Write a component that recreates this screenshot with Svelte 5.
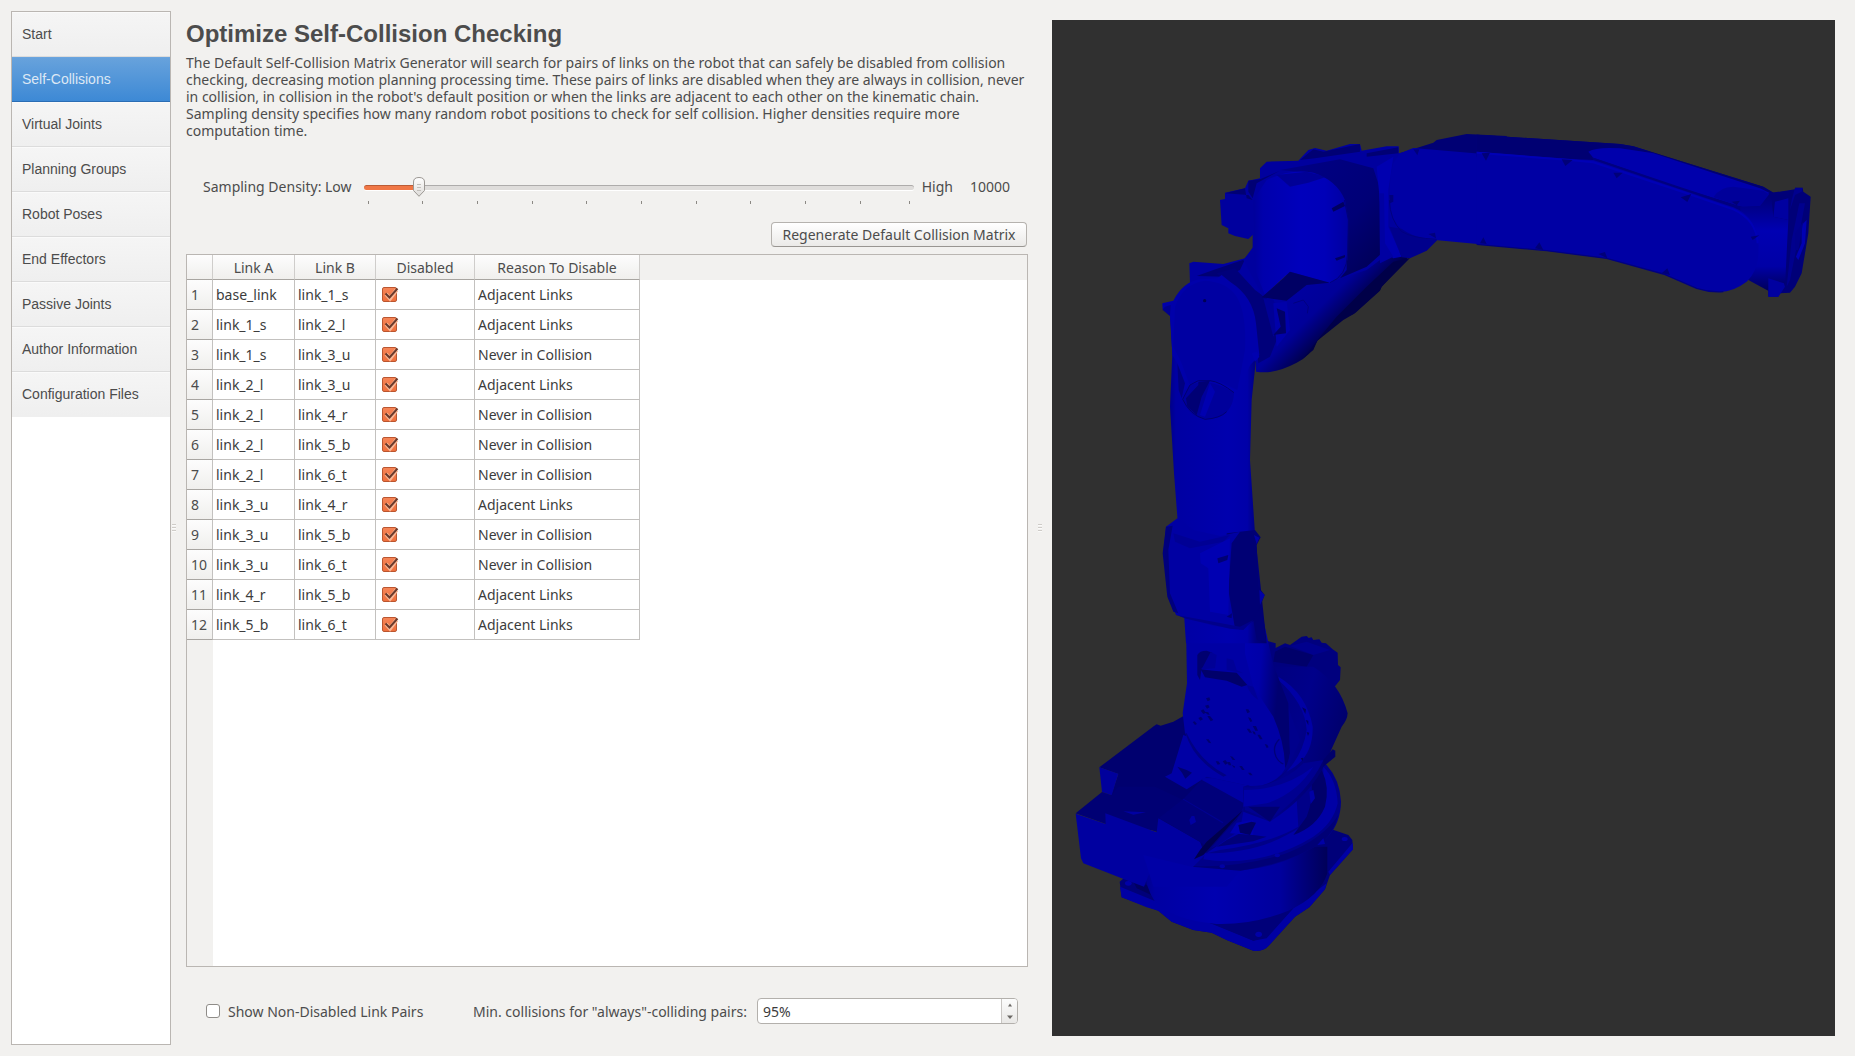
<script>
  const steps = [
    'Start', 'Self-Collisions', 'Virtual Joints', 'Planning Groups', 'Robot Poses',
    'End Effectors', 'Passive Joints', 'Author Information', 'Configuration Files'
  ];
  let current = $state('Self-Collisions');
  const adjacent = 'Adjacent Links';
  const never = 'Never in Collision';
  let pairs = $state([
    { a: 'base_link', b: 'link_1_s', disabled: true, reason: adjacent },
    { a: 'link_1_s', b: 'link_2_l', disabled: true, reason: adjacent },
    { a: 'link_1_s', b: 'link_3_u', disabled: true, reason: never },
    { a: 'link_2_l', b: 'link_3_u', disabled: true, reason: adjacent },
    { a: 'link_2_l', b: 'link_4_r', disabled: true, reason: never },
    { a: 'link_2_l', b: 'link_5_b', disabled: true, reason: never },
    { a: 'link_2_l', b: 'link_6_t', disabled: true, reason: never },
    { a: 'link_3_u', b: 'link_4_r', disabled: true, reason: adjacent },
    { a: 'link_3_u', b: 'link_5_b', disabled: true, reason: never },
    { a: 'link_3_u', b: 'link_6_t', disabled: true, reason: never },
    { a: 'link_4_r', b: 'link_5_b', disabled: true, reason: adjacent },
    { a: 'link_5_b', b: 'link_6_t', disabled: true, reason: adjacent }
  ]);
  let density = $state(9.2);
  let showAll = $state(false);
  let minCollisions = $state('95%');
  const ticks = Array.from({ length: 11 });

  function step(by) {
    const n = Math.min(100, Math.max(0, (parseInt(minCollisions) || 0) + by));
    minCollisions = n + '%';
  }
</script>

<div class="window">
  <nav class="steps" aria-label="Setup steps">
    {#each steps as name}
      <button type="button" class="step" class:selected={current === name} onclick={() => (current = name)}>{name}</button>
    {/each}
  </nav>

  <div class="splitter" aria-hidden="true"><i></i></div>

  <main class="content">
    <h1>Optimize Self-Collision Checking</h1>
    <p class="intro">
      The Default Self-Collision Matrix Generator will search for pairs of links on the robot that can safely be disabled from collision<br />
      checking, decreasing motion planning processing time. These pairs of links are disabled when they are always in collision, never<br />
      in collision, in collision in the robot's default position or when the links are adjacent to each other on the kinematic chain.<br />
      Sampling density specifies how many random robot positions to check for self collision. Higher densities require more<br />
      computation time.
    </p>

    <div class="density">
      <label for="density">Sampling Density: Low</label>
      <div class="slider" style="--fill: {density / 100}">
        <input id="density" type="range" min="0" max="100" step="0.1" bind:value={density} />
        <svg class="handle" viewBox="0 0 12 20" aria-hidden="true">
          <defs><linearGradient id="knob" x1="0" x2="0" y1="0" y2="1"><stop offset="0" stop-color="#fff" /><stop offset="1" stop-color="#dddbd8" /></linearGradient></defs>
          <path d="M.5 5Q.5 .5 6 .5T11.500 5V13.500L6 19.300 .5 13.500z" fill="url(#knob)" stroke="#9b9793" />
          <path d="M4 7.500h4M4 10.500h4M4 13.500h4" stroke="#c2bfbb" />
        </svg>
        <div class="ticks" aria-hidden="true">{#each ticks as _}<i></i>{/each}</div>
      </div>
      <span class="high">High</span>
      <output for="density">10000</output>
    </div>

    <div class="actions"><button type="button" class="push">Regenerate Default Collision Matrix</button></div>

    <div class="matrix">
      <table>
        <thead>
          <tr>
            <th class="num"></th><th class="la">Link A</th><th class="lb">Link B</th><th class="dis">Disabled</th><th class="why">Reason To Disable</th>
          </tr>
        </thead>
        <tbody>
          {#each pairs as pair, i}
            <tr>
              <th scope="row">{i + 1}</th>
              <td>{pair.a}</td>
              <td>{pair.b}</td>
              <td>
                <label class="tick">
                  <input type="checkbox" bind:checked={pair.disabled} aria-label="Disable {pair.a} and {pair.b}" />
                  <svg viewBox="0 0 18 16" aria-hidden="true">
                    <path d="M4 7 L8 11.500 L14.500 3" fill="none" stroke="#f9b795" stroke-width="4" />
                    <path d="M3.500 6.500 L7.500 10.500 L15.500 1.500" fill="none" stroke="#6b3a2c" stroke-width="2" />
                  </svg>
                </label>
              </td>
              <td>{pair.reason}</td>
            </tr>
          {/each}
        </tbody>
      </table>
      <div class="gutter"></div>
    </div>

    <div class="options">
      <label class="show"><input type="checkbox" bind:checked={showAll} />Show Non-Disabled Link Pairs</label>
      <label class="min" for="min">Min. collisions for "always"-colliding pairs:</label>
      <div class="spin">
        <input id="min" type="text" bind:value={minCollisions} />
        <div class="arrows">
          <button type="button" aria-label="Increase" onclick={() => step(1)}><svg viewBox="0 0 6 4"><path d="M1 3.500h4L3 .5z" /></svg></button>
          <button type="button" aria-label="Decrease" onclick={() => step(-1)}><svg viewBox="0 0 6 4"><path d="M0 .5h6L3 4z" /></svg></button>
        </div>
      </div>
    </div>
  </main>

  <div class="splitter wide" aria-hidden="true"><i></i></div>

  <section class="view" aria-label="Robot model">
    <svg viewBox="1052 20 783 1016" role="img" aria-label="Blue six-axis robot arm">
      <defs>
        <linearGradient id="drum" x1="0" x2="1"><stop offset="0" stop-color="#000083" /><stop offset=".08" stop-color="#0000a2" /><stop offset=".4" stop-color="#0000b0" /><stop offset=".75" stop-color="#00009c" /><stop offset="1" stop-color="#000058" /></linearGradient>
        <linearGradient id="motor" x1="0" x2="1" y2=".4"><stop offset="0" stop-color="#000078" /><stop offset=".6" stop-color="#00008a" /><stop offset="1" stop-color="#00006a" /></linearGradient>
        <linearGradient id="leg" x1="0" x2="1"><stop offset="0" stop-color="#000088" /><stop offset=".06" stop-color="#0000a2" /><stop offset=".6" stop-color="#0000ae" /><stop offset=".8" stop-color="#0000a8" /><stop offset=".88" stop-color="#000080" /><stop offset="1" stop-color="#000068" /></linearGradient>
        <linearGradient id="shin" x1="0" x2="1" y2=".3"><stop offset="0" stop-color="#0000b0" /><stop offset=".4" stop-color="#0000a8" /><stop offset=".8" stop-color="#000070" /></linearGradient>
        <linearGradient id="elbow" gradientUnits="userSpaceOnUse" x1="470" y1="180" x2="590" y2="300"><stop offset="0" stop-color="#0000a0" /><stop offset=".5" stop-color="#000098" /><stop offset=".75" stop-color="#000070" /><stop offset="1" stop-color="#000044" /></linearGradient>
        <linearGradient id="head" x1="0" x2="1"><stop offset="0" stop-color="#00009a" /><stop offset=".1" stop-color="#0000ac" /><stop offset=".5" stop-color="#0000bc" /><stop offset=".75" stop-color="#0000b8" /><stop offset="1" stop-color="#0000a0" /></linearGradient>
        <linearGradient id="cap" x1="0" x2="1" y1="0" y2="1"><stop offset="0" stop-color="#000088" /><stop offset=".6" stop-color="#000076" /><stop offset="1" stop-color="#000050" /></linearGradient>
        <linearGradient id="wrist" y1="0" y2="1" x1="0" x2="0"><stop offset="0" stop-color="#00006c" /><stop offset=".4" stop-color="#0000b2" /><stop offset=".75" stop-color="#0000a6" /><stop offset="1" stop-color="#000058" /></linearGradient>
      </defs>

      <!-- base, turntable and shoulder -->
      <g transform="translate(1040 620) scale(.33333)">
        <path fill="#000079" d="M860 628 870 626 925 645 937 660 939 688 870 765 855 808 808 862 765 890 688 975Q670 996 640 992L560 960 515 938 460 930 395 905 355 872 245 832 239 785 262 766z" />
        <path fill="#0000a4" d="M240 800 350 845 400 880 520 912 600 945 640 962 680 955 760 865 860 790 855 808 808 862 765 890 688 975Q670 996 640 992L560 960 515 938 460 930 395 905 355 872 320 862 245 832z" />
        <path fill="#0000a4" d="M865 755 938 668 939 688 870 765z" />
        <path fill="#000079" d="M500 905 640 905 745 868 760 865 680 950 640 962z" />
        <g fill="#0000a8"><ellipse cx="265" cy="790" rx="10" ry="7" /><ellipse cx="656" cy="943" rx="10" ry="8" /><ellipse cx="914" cy="657" rx="9" ry="6" /></g>
        <path fill="#000060" d="M280 785 340 800 345 830 290 805z" />
        <path fill="url(#drum)" d="M300 680H862L862 760Q840 830 745 872Q640 915 530 912Q400 900 345 845Q315 800 312 740z" />
        <path fill="#00008c" d="M440 280 700 140 840 300 855 435 860 600 600 735 450 742 400 470z" />
        <path fill="#00007e" d="M500 690 620 640 800 610 700 680 500 710z" />
        <path fill="#000088" d="M700 560 800 400 860 435Q900 480 903 545Q902 610 860 655Q760 735 600 752Q520 755 455 745L490 700 700 600z" />
        <path fill="#0000a5" d="M850 440Q890 480 893 550Q880 610 820 650Q740 700 640 718Q560 730 490 718L495 700Q640 700 740 645Q830 600 850 530z" />
        <path fill="#000076" d="M456 738Q600 745 740 700Q850 655 895 585 880 640 845 668Q750 730 600 752Q520 755 455 745z" />
        <path fill="#00006a" d="M815 490 845 450Q870 500 855 560Q830 620 760 645L800 590Q820 540 815 490z" />
        <g fill="#0000a5"><ellipse cx="547" cy="739" rx="8" ry="6" /><ellipse cx="712" cy="706" rx="8" ry="6" /><path d="M832 675 850 655 855 672zM808 515 820 510 825 535 812 552zM878 525l10 2-2 8z" /></g>
        <path fill="#0000a5" d="M610 575 690 560 770 540 775 620Q690 670 540 690L500 700 600 630z" />
        <path fill="#000079" d="M560 660 600 640 680 650 640 664 530 680z" />

        <!-- electrical boxes -->
        <path fill="#00006f" d="M342 318 350 313 362 317 400 305 432 287 440 340 400 460 510 480 615 545 590 600 490 700 350 635 195 580 235 462 178 442z" />
        <path fill="#0000a5" d="M430 345 395 460 375 470 440 508 500 470 640 500 470 360z" />
        <path fill="#00006f" d="M412 440 440 450 456 458 436 476 426 458z" />
        <path fill="#00009c" d="M178 442 235 461 215 526 186 516z" />
        <path fill="#000074" d="M107 580 186 516 215 526 235 500 345 500 430 540 350 632 198 612z" />
        <path fill="#0000a0" d="M107 581 197 612 196 580 325 628 350 637 355 595 480 665 495 705 455 745 330 755 312 800 245 775 130 730 123 715z" />
        <path fill="#0000a6" d="M310 705 455 740 600 752 560 800 340 800z" />
        <path fill="#00007a" d="M488 476 615 548 600 585 500 700 490 672 357 594 430 537z" />
        <path fill="#000092" d="M430 536 550 607 548 610 428 538z" />
        <path fill="#0000a2" d="M488 474 520 475 640 500 616 544 612 550 486 480z" />
        <path fill="#00004c" d="M610 570 490 705 462 718 480 690 500 665z" />
        <path fill="#0000a2" d="M448 600 455 588 463 588 468 606 452 615zM250 574 318 577 280 584z" />
        <path fill="#0000b0" d="M590 608 640 600 640 645 570 640z" />
        <path fill="#000065" d="M595 615 635 605 648 608 630 645 600 638z" />

        <!-- rear motor -->
        <path fill="#00007e" d="M680 62 707 70V84L735 70 750 75 785 50 800 48 806 54 815 52 820 60 838 58 845 68 858 70 878 88 893 98 894 135 902 142 900 180 878 208 700 150z" />
        <path fill="#00006a" d="M705 95 735 80 820 105 800 140 700 125z" />
        <path fill="#00008d" d="M750 78 800 65 870 90 820 105z" />
        <path fill="url(#motor)" d="M700 140 820 140Q900 190 923 280 922 300 905 320L860 420Q820 520 690 605L610 575V500L735 460 780 360z" />
        <path fill="#00006a" d="M850 420 878 388 886 392V410L850 440z" />
        <path fill="#0000a5" d="M715 170Q800 220 818 320 820 400 765 440L740 455Q790 400 800 330 795 250 715 180z" />
        <path fill="#000062" d="M786 262 798 268 796 282zM797 300l8 2v14zM800 336l8 2-4 10zM782 415l8-2-2 10z" />
        <path fill="#000090" d="M610 500Q720 500 790 430L850 420Q810 510 690 600L615 570z" />
        <path fill="#0000a6" d="M612 510Q730 510 820 440 770 520 680 550L610 560z" />
        <path fill="#000070" d="M625 560 720 560 690 605z" />

        <!-- lower arm -->
        <path fill="#0000a4" d="M437 -40H665L690 130 735 240 748 350 750 400Q742 440 725 462Q690 500 630 498L560 470Q480 420 435 340L428 280 441 190z" />
        <path fill="url(#shin)" d="M615 0H670L700 135 745 250 750 400Q745 430 735 445 735 370 700 290L640 200 615 100z" />
        <path fill="#000083" d="M436 338Q460 420 550 470L560 466Q480 425 440 340z" />
        <path fill="#000080" d="M610 504Q700 505 748 440 720 490 650 500z" />
        <path fill="#000070" d="M472 165V105Q478 92 500 92L517 98 508 130 485 145 480 180z" />
        <path fill="#00006a" d="M482 148 520 152 590 158 622 195 605 200 560 182 495 172z" />
        <path fill="#000096" d="M512 96 530 105 525 145 485 148zM560 115 580 120 590 150 610 160 560 150zM620 195 640 200 655 240Q630 225 620 195z" />
        <path fill="none" stroke="#000078" stroke-width="4" d="M718 358Q695 380 708 410 715 425 730 432" />
        <g fill="#000070"><path d="M498 235l10-3 3 8-8 4zM495 257l10-3 4 8-8 4zM482 272l8-4 8 10-8 4zM502 288l8 0 10 12-8 4zM475 294l8-4 6 8-8 4zM458 306l6-2 7 8-6 3zM495 275l10 2 4 8-8-2zM498 358l8 0 8 12-8-2zM617 268l8 0 5 8-8 4zM624 292l8 2 5 10-6 2zM620 326l8 0 8 12-8 0zM638 318l10 0 6 14-8 0zM637 333l8 3 2 8-6-2zM652 344l8 0 8 14-8 0zM674 372l8 2 4 8-6 2zM527 424l8 0 6 8-8 2zM548 424l8-4 8 10-8 4zM570 408l8 2 8 10-8 0zM562 426l8 0 4 10-8 0zM575 435l10 4-2 6zM598 438l8 0 8 12-8 0zM624 458l8 0 6 8-8 0z" /></g>
      </g>

      <!-- link between shoulder and elbow -->
      <g transform="translate(1130 240) scale(.33333)">
        <path fill="url(#elbow)" d="M370 170 640 60 920 -10 890 30 835 52 755 140 750 150 670 222 640 235 600 265 562 303Q540 350 500 368 430 405 378 395z" />
        <path fill="#0000a2" d="M178 70 190 65 280 72 345 55 370 20 400 60 410 180 300 180 180 130z" />
        <path fill="#000074" d="M200 108 250 90 345 58 330 90 280 110z" />
        <path fill="url(#leg)" d="M120 220 380 340 365 480 360 660 375 880 410 1210H168L142 830 132 700 120 500 127 340z" />
        <path fill="#00007a" d="M260 100 315 85 375 150 430 190 440 300 420 350 385 370 370 220 320 150z" />
        <path fill="#000095" d="M400 175 430 178 455 240 430 290z" />
        <path fill="#0000aa" d="M430 190 470 185 480 270 440 320z" />
        <path fill="#000067" d="M440 205 465 215 468 280 430 285 452 260z" />
        <path fill="#0000aa" d="M97 190 130 182Q160 125 210 118L262 115 275 105 300 125Q370 170 378 250L388 345 370 365Q350 380 345 430L315 450Q250 410 180 435L150 465 142 370 127 345 120 228 98 208z" />
        <path fill="#0000a2" d="M135 200Q160 130 225 122 290 125 320 170 350 220 345 330L322 450 270 425Q225 415 178 432L155 370 130 320z" />
        <path fill="#00007b" d="M97 210 120 228 122 195 105 200z" opacity=".6" />
        <path fill="#0000b0" d="M365 340 380 335 388 350 375 365z" />
        <circle cx="224" cy="182" r="5" fill="#000055" />
        <path fill="#00009b" d="M180 435Q240 410 312 458 310 510 270 530 225 545 190 525 170 510 158 478z" />
        <path fill="none" stroke="#000070" stroke-width="3" d="M312 458Q270 425 240 422L205 422 180 435 158 478Q180 525 225 538 270 535 290 515" />
        <path fill="#000074" d="M205 425 240 422 215 470 200 525 172 500 168 475 205 435z" />
        <path fill="#0000b0" d="M240 430 255 455 225 530 210 525z" />
        <path fill="#000080" d="M142 370 165 430 155 475 146 450z" />

        <path fill="#000074" d="M290 880 375 870 392 892 380 915 385 1040 404 1065 392 1095 375 1140 330 1168 295 1160z" />
        <path fill="#0000a3" d="M108 860 142 835 190 870 270 888 330 875 305 910 295 1050 315 1165 250 1158 138 1125 118 1070 100 940z" />
        <path fill="#00007c" d="M108 860 128 857 115 930 120 1060 145 1120 130 1115 112 1070 98 940z" />
        <path fill="#000094" d="M130 880 210 905 300 885 280 905 180 925 135 905z" />
        <path fill="#0000b2" d="M210 940 300 895 295 1125 240 1115 235 985 212 970z" />
        <path fill="#000074" d="M262 955 295 945 292 960 265 970zM290 1130 306 1120 305 1135z" />
        <path fill="#00008a" d="M140 1125 250 1145 330 1160 370 1140 340 1170 300 1166 168 1136z" />
        <path fill="#0000a6" d="M372 885 388 893 380 912zM388 1050 404 1065 390 1095z" />
        <path fill="#000074" d="M370 1140 392 1095 408 1205 380 1200z" />
      </g>

      <!-- upper arm housing -->
      <g transform="translate(1180 120) scale(.33333)">
        <path fill="#00009e" d="M120 240 135 237V218L195 205 205 182 240 175V145L260 125 355 122 385 90 405 84 440 92 510 72H540L545 92 620 79H656V100L680 95 700 380 600 420 560 450 440 490 380 495 310 460 250 532 190 420 218 385V345L205 357 165 348 145 340V325L125 315z" />
        <path fill="#000074" d="M135 220 195 205 200 235 218 240 205 225zM360 120 400 88 430 95 540 72V95L405 115zM560 100 655 82V100L560 110zM205 182 240 178 300 152 230 190 218 235 205 215z" />
        <path fill="url(#cap)" d="M300 150 480 118 580 145 598 200 605 400 560 440 480 475 500 450V280L470 210 400 160z" />
        <path fill="#0000b0" d="M590 140 640 110 625 210V320L665 410 640 415 610 390 605 300z" />
        <path fill="#0000a2" d="M598 220 612 220 615 370 640 410 600 430z" />
        <path fill="#00008c" d="M628 320 780 345 770 362 740 392 690 415 665 412z" />
        <path fill="url(#head)" d="M220 240 260 180Q330 145 400 158 470 180 495 240L505 300 502 420Q490 470 450 490L330 455 255 525 225 450z" />
        <path fill="#000082" d="M290 165 380 155 440 170 385 188 330 200z" opacity=".65" />
        <path fill="#000060" d="M455 265 490 245 495 258 460 275zM465 415 495 405 495 412 470 422z" />
        <path fill="none" stroke="#00007a" stroke-width="3" d="M493 240 505 300 503 400Q500 470 450 488" />
        <path fill="#000064" d="M245 532 310 475 330 455 450 488 380 495 320 542z" />
        <path fill="none" stroke="#000080" stroke-width="3" d="M340 550 370 540 385 560 382 580" />
        <path fill="#000048" d="M690 414 605 500 600 512 525 580 490 600 412 662 400 690 370 715 420 650 470 590 560 500 640 425z" />

        <path fill="#000074" d="M660 100 760 68 770 60 860 42 980 48V110L710 100z" />
        <path fill="#0000a4" d="M660 100 700 84 980 108V380L765 360Q660 350 635 285 620 200 640 130z" />
        <path fill="none" stroke="#000080" stroke-width="3" d="M628 240Q630 300 665 335 700 355 770 358" />
        <path fill="#00007c" d="M700 88 718 88 712 106zM908 100 930 102 920 120zM628 225 640 225V245L630 250zM745 342 765 338 768 355zM905 355 920 355 925 370z" />
      </g>

      <!-- forearm and wrist -->
      <g transform="translate(1480 120) scale(.33333)">
        <path fill="#00007e" d="M-10 44 420 72 460 79 850 200 880 218 860 300 760 300 330 160 -10 110z" />
        <path fill="#000072" d="M-10 44 420 72 460 79 850 200 880 218 860 225 520 100 420 85 330 95 340 120 -10 100z" />
        <path fill="#0000ac" d="M325 95Q350 80 420 85L520 100 840 205 875 222 845 255 780 258 600 203 340 113z" />
        <path fill="#00009a" d="M700 232Q720 200 760 200L850 212 870 225 845 258 790 262z" />
        <path fill="url(#wrist)" d="M780 260 840 258 870 220 950 210 930 500 870 515 805 480z" />
        <path fill="#0000a4" d="M-10 95 270 118 340 120 600 208 760 262Q830 290 835 370 840 450 800 485 760 515 720 516 680 516 650 505L550 462 380 415 200 392 -10 373z" />
        <path fill="none" stroke="#0000b6" stroke-width="6" d="M-10 98 270 120 340 127 600 213 760 268Q830 300 833 370" />
        <path fill="none" stroke="#000080" stroke-width="4" d="M340 115 600 203 780 262M-10 373 200 392 380 415 550 462 650 505Q690 518 730 515" />
        <path fill="#000078" d="M5 100 30 98 18 122zM245 118 278 120 256 138zM400 158 428 158 410 175zM602 232 634 222 622 246zM812 350 838 346 818 360zM0 370 10 352 20 372zM165 385 178 367 190 390zM355 402 375 396 382 415zM545 460 562 445 570 465zM755 245 780 242 770 256z" />
        <path fill="#000078" d="M865 220 945 208 945 203H968L970 215 992 230 985 340 965 460 945 500 930 518 900 520 895 530H865V512L915 500 925 300 880 290 875 240z" />
        <path fill="#0000a0" d="M885 245 925 235 925 300 880 290zM865 475 912 490 915 500 895 530H865z" />
        <path fill="#00009c" d="M945 203H968L965 215 945 225 930 270 925 300 935 240zM958 250 975 250 960 330 930 480 920 500 935 360z" opacity=".6" />
        <path fill="#0000b2" d="M965 315 980 300 975 370 955 420 948 410 965 370z" />
        <path fill="#00008a" d="M945 340 970 305 955 390 945 390z" />
      </g>
    </svg>
  </section>
</div>

<style>
  :global(body) { background: #f2f1ef; }
  :global(*) { box-sizing: border-box; }
  .window {
    display: flex;
    min-height: 100vh;
    padding: 11px 20px 11px 11px;
    background: #f2f1ef;
    color: #4c4c4c;
    font: 14px/17px "Noto Sans", "Open Sans", sans-serif;
  }
  button, input { font: inherit; color: inherit; margin: 0; }

  .steps {
    flex: 0 0 160px;
    display: flex;
    flex-direction: column;
    background: #fff;
    border: 1px solid #bab6b2;
  }
  .step {
    height: 45px;
    padding: 0 10px;
    border: 0;
    border-top: 1px solid #fafafa;
    border-bottom: 1px solid #dcdcdc;
    background: linear-gradient(#f5f5f5, #efefef);
    font: 14px/17px "Liberation Sans", Arial, sans-serif;
    text-align: left;
  }
  .step:last-child { border-bottom-color: #efefef; }
  .step.selected {
    border-top-color: #6aa4de;
    border-bottom-color: #2a6db4;
    background: linear-gradient(#67a2dc, #3d89d5);
    color: #dde8f5;
  }

  .splitter { flex: 0 0 15px; display: flex; align-items: center; padding-left: 1px; }
  .splitter i { width: 4px; height: 8px; background: repeating-linear-gradient(#cfccc8 0 1px, #fbfbfa 1px 2px, transparent 2px 3px); }
  .splitter.wide { flex-basis: 24px; padding-left: 10px; }

  .content { flex: 842 1 0; min-width: 0; display: flex; flex-direction: column; }
  h1 { margin: 9px 0 0; font: bold 24px/28px "Liberation Sans", Arial, sans-serif; }
  .intro { margin: 6px 0 0; white-space: nowrap; }

  .density { display: flex; align-items: flex-start; margin: 38px 18px 0 17px; line-height: 20px; }
  .slider { position: relative; flex: 1; margin: 0 8px 0 12px; }
  .slider input {
    display: block;
    width: 100%;
    height: 20px;
    appearance: none;
    background: none;
  }
  .slider input::-webkit-slider-runnable-track {
    height: 5px;
    border-radius: 3px;
    border-top: 1px solid rgb(0 0 0 / .22);
    background: linear-gradient(to right, #f07746 calc(var(--fill) * 100%), #dfdddb calc(var(--fill) * 100%));
    background-origin: border-box;
    box-shadow: 0 1px #fff;
  }
  .slider input::-webkit-slider-thumb { appearance: none; width: 12px; height: 20px; margin-top: -9px; opacity: 0; }
  .handle {
    position: absolute;
    top: 0;
    left: calc((100% - 12px) * var(--fill));
    width: 12px;
    height: 20px;
    pointer-events: none;
  }
  .ticks { display: grid; grid-template-columns: repeat(9, 10fr) 9fr 1px; padding: 4px 4px 0; }
  .ticks i { width: 1px; height: 3px; background: #8c8984; }
  output { margin-left: 17px; }

  .actions { display: flex; justify-content: flex-end; margin-top: 18px; padding-right: 1px; }
  .push {
    height: 25px;
    min-width: 256px;
    padding: 0 8px;
    border: 1px solid #b5b2ae;
    border-bottom-color: #999692;
    border-radius: 4px;
    background: linear-gradient(#fff, #ebeae8);
    white-space: nowrap;
  }

  .matrix { flex: 1; display: flex; flex-direction: column; margin-top: 7px; background: linear-gradient(#f2f1ef 25px, #fff 25px); border: 1px solid #bab6b2; }
  table { width: 453px; table-layout: fixed; border-collapse: separate; border-spacing: 0; }
  th, td { padding: 0; font-weight: normal; border-right: 1px solid #c3c1bf; border-bottom: 1px solid #c3c1bf; }
  thead th { height: 25px; background: linear-gradient(#fdfdfd, #f0efed); border-right-color: #cfcdcb; border-bottom-color: #a8a5a1; }
  .num { width: 26px; }
  .la { width: 82px; }
  .lb { width: 81px; }
  .dis { width: 99px; }
  td { height: 30px; padding-left: 3px; color: #3c3c3c; }
  tbody th { padding-left: 4px; text-align: left; background: linear-gradient(#fdfdfd, #f0efed); border-bottom-color: #a8a5a1; }
  .gutter { flex: 1; width: 26px; background: #f2f1ef; }

  .tick { position: relative; display: block; width: 18px; height: 16px; margin-left: 3px; }
  .tick input {
    appearance: none;
    display: block;
    width: 15px;
    height: 15px;
    border: 1px solid #ba5630;
    border-radius: 2px;
    background: #fff;
  }
  .tick input:checked { background: linear-gradient(#f58558, #ee6f3d); }
  .tick svg { position: absolute; inset: 0; visibility: hidden; }
  .tick input:checked + svg { visibility: visible; }

  .options { display: flex; align-items: center; margin: 31px 10px 21px 20px; white-space: nowrap; }
  .show { display: flex; align-items: center; gap: 8px; width: 267px; }
  .show input { appearance: none; width: 14px; height: 14px; border: 1px solid #8f8c88; border-radius: 3px; background: #fff; }
  .show input:checked { background: #f07746; }
  .spin { flex: 1; min-width: 0; display: flex; height: 26px; margin-left: 10px; border: 1px solid #b3b0ac; border-radius: 4px; background: #fff; overflow: hidden; }
  .spin input { flex: 1; min-width: 0; padding: 0 5px; border: 0; outline: 0; background: none; color: #3c3c3c; }
  .arrows { flex: 0 0 16px; display: flex; flex-direction: column; border-left: 1px solid #c9c6c3; background: linear-gradient(#fcfcfc, #e9e8e6); }
  .arrows button { flex: 1; display: flex; align-items: center; justify-content: center; padding: 0; border: 0; background: none; }
  .arrows svg { width: 6px; height: 4px; fill: #6b6865; }

  .view { flex: 783 1 0; min-width: 0; display: flex; margin: 9px 0 9px; background: #303030; }
  .view svg { width: 100%; height: auto; }
</style>
